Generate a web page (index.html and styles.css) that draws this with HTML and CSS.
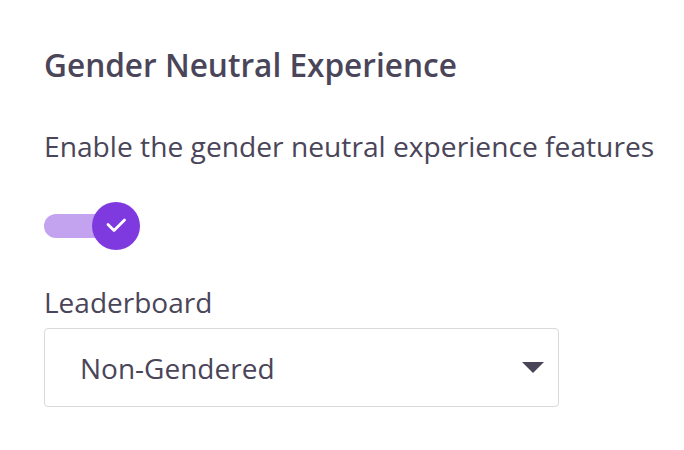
FILE: index.html
```html
<!DOCTYPE html>
<html>
<head>
<meta charset="utf-8">
<link rel="stylesheet" href="styles.css">
</head>
<body>
<section class="panel">
  <h2 class="title">Gender Neutral Experience</h2>
  <p class="desc">Enable the gender neutral experience features</p>
  <div class="toggle">
    <span class="track"></span>
    <span class="knob">
      <svg width="24" height="24" viewBox="0 0 24 24"><path d="M4 10.5 L10 16.5 L20.5 6" fill="none" stroke="#fff" stroke-width="2.8" stroke-linecap="round" stroke-linejoin="round"/></svg>
    </span>
  </div>
  <label class="label">Leaderboard</label>
  <div class="select">
    <span class="value">Non-Gendered</span>
    <svg class="caret" width="22" height="11" viewBox="0 0 22 11"><path d="M0 0 H22 L11 11 Z" fill="#4a4458"/></svg>
  </div>
</section>
</body>
</html>
```

FILE: styles.css
```css
html, body {
  margin: 0;
  padding: 0;
  background: #ffffff;
}
body {
  font-family: "Open Sans", "Liberation Sans", sans-serif;
  color: #4a4559;
}
.panel {
  display: flex;
  flex-direction: column;
  align-items: flex-start;
  padding: 47px 0 0 44px;
}
.title {
  margin: 0;
  font-size: 31.6px;
  line-height: 36px;
  font-weight: 600;
  letter-spacing: 0;
}
.desc {
  margin: 45px 0 0;
  font-size: 28.2px;
  line-height: 36px;
  font-weight: 400;
}
.toggle {
  position: relative;
  margin-top: 38px;
  width: 96px;
  height: 48px;
  display: flex;
  align-items: center;
}
.track {
  width: 88px;
  height: 24px;
  border-radius: 12px;
  background: #c3a2ef;
}
.knob {
  position: absolute;
  left: 48px;
  top: 0;
  width: 48px;
  height: 48px;
  border-radius: 50%;
  background: #7f3adf;
  display: flex;
  align-items: center;
  justify-content: center;
}
.label {
  margin-top: 34px;
  font-size: 28px;
  line-height: 36px;
}
.select {
  margin-top: 8px;
  box-sizing: border-box;
  width: 515px;
  height: 79px;
  border: 1px solid #d9d9dd;
  border-radius: 4px;
  display: flex;
  align-items: center;
  justify-content: space-between;
  padding: 0 14px 0 35px;
}
.value {
  font-size: 28px;
  line-height: 36px;
}
.caret {
  display: block;
}
```
